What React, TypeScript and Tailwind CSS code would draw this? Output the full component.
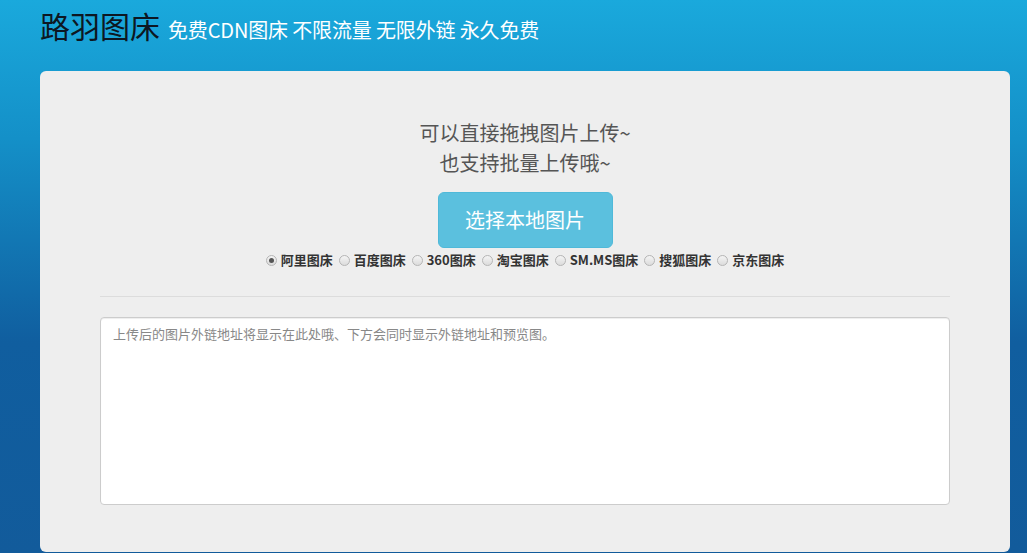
const HOSTS = ['阿里图床', '百度图床', '360图床', '淘宝图床', 'SM.MS图床', '搜狐图床', '京东图床'];

function Radio({ checked }: { checked: boolean }) {
  return (
    <span className="inline-flex h-[11px] w-[11px] shrink-0 items-center justify-center rounded-full border border-[#b5b5b5] bg-gradient-to-b from-[#f4f4f4] to-[#dcdcdc]">
      {checked && <span className="h-[5px] w-[5px] rounded-full bg-[#555]" />}
    </span>
  );
}

export default function App() {
  return (
    <div
      className="h-[553px] w-full overflow-hidden bg-[linear-gradient(180deg,#1aa9dc_0%,#1490c8_25%,#105e9f_62%,#125b9b_100%)]"
      style={{ fontFamily: '"Noto Sans CJK SC", "Noto Sans", sans-serif' }}
    >
      {/* header */}
      <div className="flex h-[71px] items-baseline gap-[8px] pl-[40px] pt-[6px]">
        <h1 className="text-[30px] leading-[38px] font-normal text-[#0d1722]">路羽图床</h1>
        <span className="text-[20px] leading-[28px] tracking-[-0.15px] text-white">免费CDN图床 不限流量 无限外链 永久免费</span>
      </div>

      {/* main card */}
      <div className="ml-[40px] flex h-[481px] w-[970px] flex-col items-center rounded-[6px] bg-[#eeeeee] px-[60px] pt-[47px]">
        <p className="text-center text-[20px] leading-[30px] text-[#555]">
          可以直接拖拽图片上传~
          <br />
          也支持批量上传哦~
        </p>

        <button className="mt-[14px] h-[56px] w-[175px] rounded-[6px] border border-[#4fb9d9] bg-[#5bc0de] text-[20px] text-white">
          选择本地图片
        </button>

        <div className="mt-[3px] flex items-center text-[13px] leading-[18px] font-bold text-[#333]">
          {HOSTS.map((h, i) => (
            <label key={h} className="mr-[6px] flex items-center gap-[4px] last:mr-0">
              <Radio checked={i === 0} />
              <span>{h}</span>
            </label>
          ))}
        </div>

        <div className="mt-[27px] h-px w-full bg-[#dcdcdc]" />

        <div className="mt-[20px] h-[188px] w-full rounded-[4px] border border-[#cccccc] bg-white px-[12px] pt-[7px] shadow-[inset_0_1px_1px_rgba(0,0,0,0.075)]">
          <p className="text-[13px] leading-[18px] text-[#888]">
            上传后的图片外链地址将显示在此处哦、下方会同时显示外链地址和预览图。
          </p>
        </div>
      </div>
    </div>
  );
}
